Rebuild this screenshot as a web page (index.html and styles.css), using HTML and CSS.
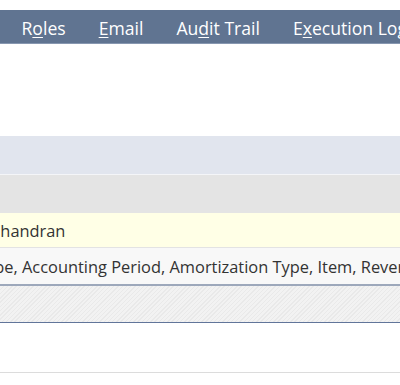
FILE: index.html
```html
<!DOCTYPE html>
<html lang="en">
<head>
    <meta charset="UTF-8">
    <title>Record Details</title>
    <link rel="stylesheet" href="styles.css">
</head>
<body>
    <div class="page">
        <ul class="tabs">
            <li>R<u>o</u>les</li>
            <li><u>E</u>mail</li>
            <li>Au<u>d</u>it Trail</li>
            <li>E<u>x</u>ecution Log</li>
        </ul>

        <div class="panel">
            <div class="band head"></div>
            <div class="band sub"></div>
            <div class="row owner"><span class="name">Chandran</span></div>
            <div class="row fields"><span class="list">Type, Accounting Period, Amortization Type, Item, Revenue Recognition Rule, Subsidiary</span></div>
            <div class="hatch"></div>
        </div>

        <div class="footer-line"></div>
    </div>
</body>
</html>
```

FILE: styles.css
```css
body {
    margin: 0;
    font-family: "Open Sans", "Liberation Sans", sans-serif;
    color: #333;
    background: #fff;
    overflow: hidden;
}

.page {
    width: 400px;
    height: 385px;
    padding-top: 10px;
    box-sizing: border-box;
}

.tabs {
    list-style: none;
    margin: 0;
    padding: 3px 0 0 4px;
    box-sizing: border-box;
    display: flex;
    height: 34px;
    align-items: center;
    background-color: #607491;
    border-bottom: 1px solid #8797b0;
    white-space: nowrap;
    overflow: hidden;
}

.tabs li {
    padding: 0 16.5px;
    color: #fff;
    font-size: 17.6px;
    flex-shrink: 0;
}

.tabs li:first-child {
    padding-left: 17.5px;
}

.tabs u {
    text-decoration-thickness: 1px;
    text-underline-offset: 2px;
}

.panel {
    margin-top: 92px;
}

.band {
    height: 38px;
}

.head {
    background-color: #e1e5ee;
    border-bottom: 1px solid #f4f5f8;
}

.sub {
    background-color: #e4e4e4;
}

.row {
    font-size: 16.4px;
    white-space: nowrap;
    overflow: hidden;
    display: flex;
    align-items: center;
}

.owner {
    height: 34px;
    background-color: #ffffe6;
    border-bottom: 1px solid #e3e3e3;
}

.owner .name {
    margin-left: -10px;
}

.fields {
    height: 36px;
    background-color: #f8f8f8;
}

.fields .list {
    margin-left: -23px;
}

.hatch {
    height: 36px;
    border-top: 2px solid #9da8bb;
    border-bottom: 1px solid #61759a;
    background: repeating-linear-gradient(-45deg, #f2f2f2 0 2px, #e9e9e9 2px 3px);
}

.footer-line {
    margin-top: 49px;
    height: 1px;
    background-color: #dcdcdc;
}
```
